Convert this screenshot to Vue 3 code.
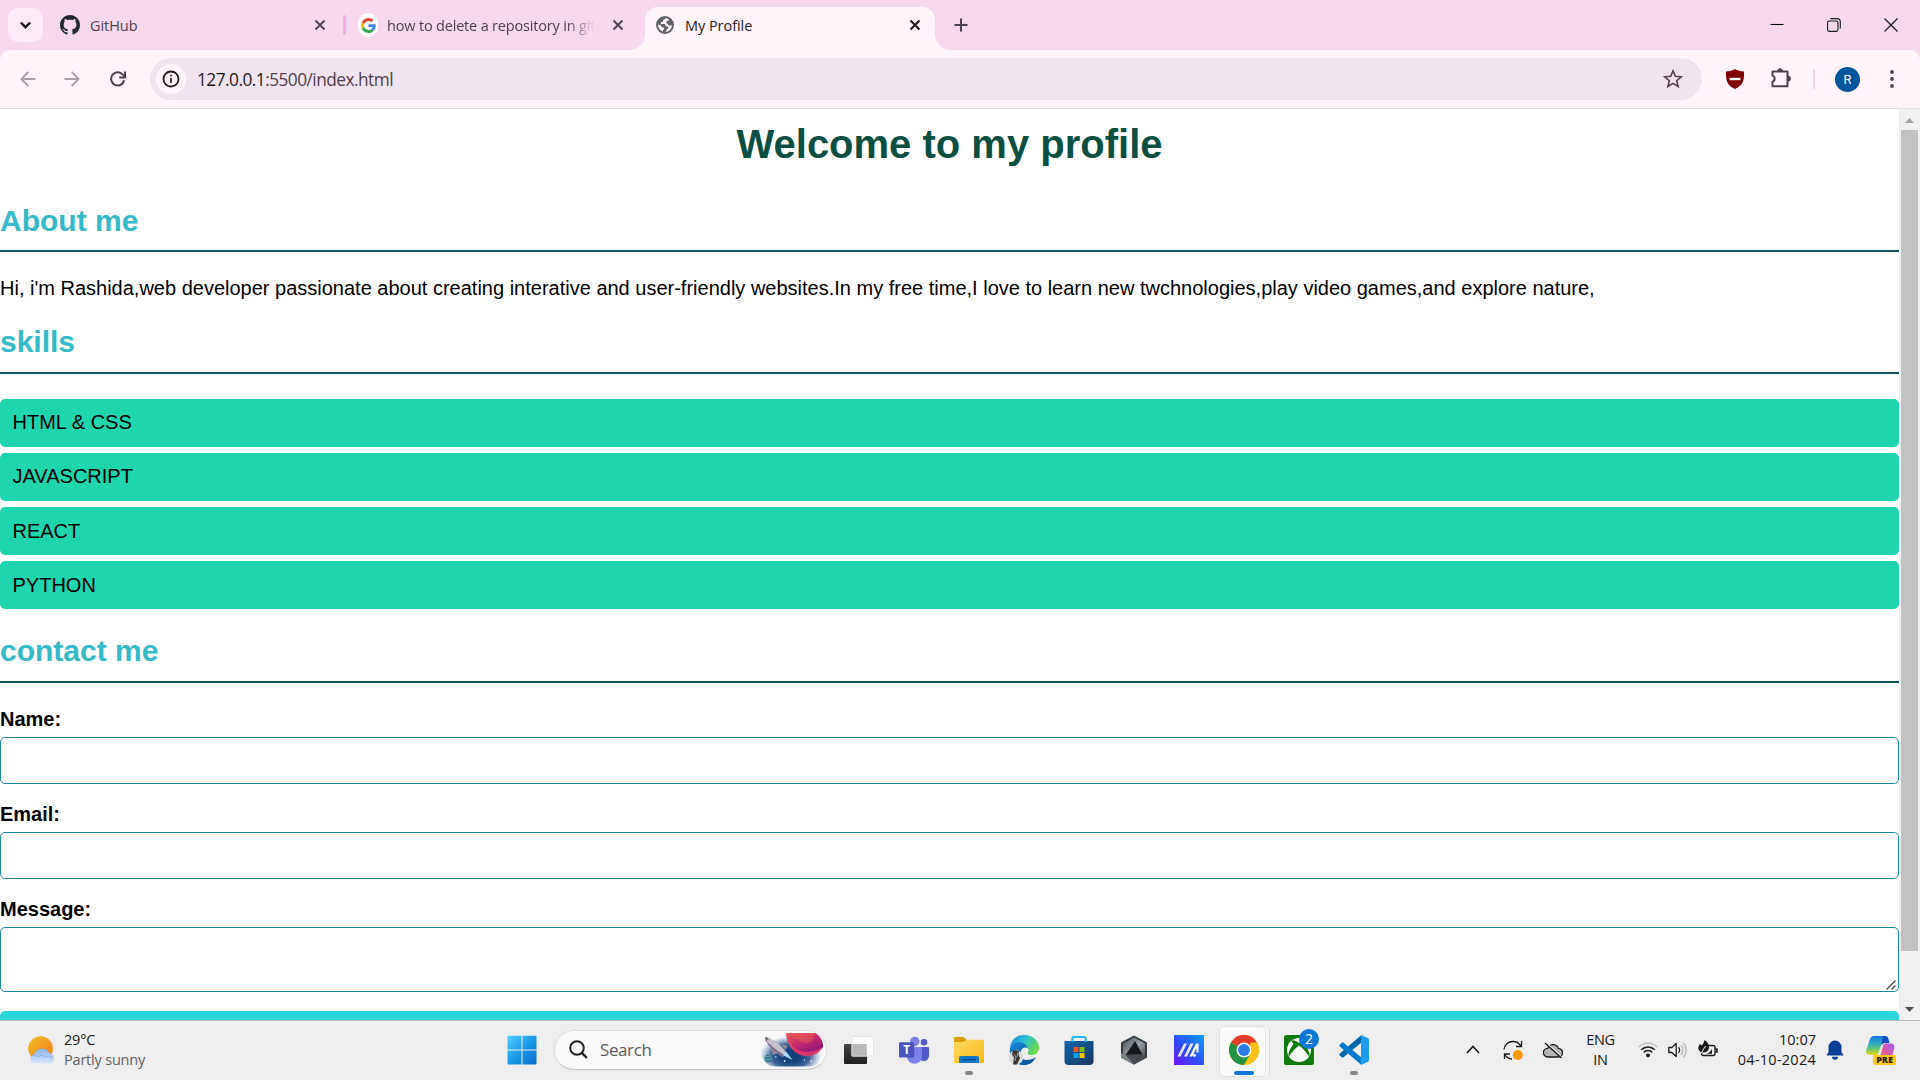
<script setup>
const skills = ['HTML & CSS', 'JAVASCRIPT', 'REACT', 'PYTHON']
</script>

<template>
  <div class="screen">
    <header class="tabs">
      <div class="tabsearch">
        <svg width="35" height="34" viewBox="0 0 35 34"><path d="M12.8 14.5l4.7 4.7 4.7-4.7" fill="none" stroke="#1f1a1d" stroke-width="2.4" /></svg>
      </div>
      <div class="tab first">
        <svg class="fav" width="20" height="20" viewBox="0 0 16 16"><path fill="#24292f" d="M8 0C3.58 0 0 3.58 0 8c0 3.54 2.29 6.53 5.47 7.59.4.07.55-.17.55-.38 0-.19-.01-.82-.01-1.49-2.01.37-2.53-.49-2.69-.94-.09-.23-.48-.94-.82-1.13-.28-.15-.68-.52-.01-.53.63-.01 1.08.58 1.23.82.72 1.21 1.87.87 2.33.66.07-.52.28-.87.51-1.07-1.78-.2-3.64-.89-3.64-3.95 0-.87.31-1.59.82-2.15-.08-.2-.36-1.02.08-2.12 0 0 .67-.21 2.2.82.64-.18 1.32-.27 2-.27s1.36.09 2 .27c1.53-1.04 2.2-.82 2.2-.82.44 1.1.16 1.92.08 2.12.51.56.82 1.27.82 2.15 0 3.07-1.87 3.75-3.65 3.95.29.25.54.73.54 1.48 0 1.07-.01 1.93-.01 2.2 0 .21.15.46.55.38A8.01 8.01 0 0 0 16 8c0-4.42-3.58-8-8-8z" /></svg>
        <span class="title t1">GitHub</span>
        <svg class="x" width="12" height="12" viewBox="0 0 12 12"><path d="M1.5 1.5l9 9m0-9l-9 9" stroke="#50404b" stroke-width="1.9" /></svg>
      </div>
      <i class="tabsep"></i>
      <div class="tab second">
        <span class="gwrap"><svg width="15" height="15" viewBox="0 0 48 48"><path fill="#EA4335" d="M24 9.5c3.54 0 6.71 1.22 9.21 3.6l6.85-6.85C35.9 2.38 30.47 0 24 0 14.62 0 6.51 5.38 2.56 13.22l7.98 6.19C12.43 13.72 17.74 9.5 24 9.5z" /><path fill="#4285F4" d="M46.98 24.55c0-1.57-.15-3.09-.38-4.55H24v9.02h12.94c-.58 2.96-2.26 5.48-4.78 7.18l7.73 6c4.51-4.18 7.09-10.36 7.09-17.65z" /><path fill="#FBBC05" d="M10.53 28.59c-.48-1.45-.76-2.99-.76-4.59s.27-3.14.76-4.59l-7.98-6.19C.92 16.46 0 20.12 0 24s.92 7.54 2.56 10.78l7.97-6.19z" /><path fill="#34A853" d="M24 48c6.48 0 11.93-2.13 15.89-5.81l-7.73-6c-2.15 1.45-4.92 2.3-8.16 2.3-6.26 0-11.57-4.22-13.47-9.91l-7.98 6.19C6.51 42.62 14.62 48 24 48z" /></svg></span>
        <span class="title t2">how to delete a repository in git</span>
        <svg class="x" width="12" height="12" viewBox="0 0 12 12"><path d="M1.5 1.5l9 9m0-9l-9 9" stroke="#50404b" stroke-width="1.9" /></svg>
      </div>
      <div class="tab active">
        <svg class="fav" width="18" height="18" viewBox="0 0 18 18"><circle cx="9" cy="9" r="9" fill="#5f6368" /><path fill="#fff5fa" d="M9.8 2.1c-.3.9-1.1 1.2-2 1.3-.6.1-.9.9-.5 1.6-.1.9-1.2.9-2 1.1-.7.2-.5 1.4-.2 1.9 1.4.2 3.6-.2 4.2.6.5.8.3 1.8 1.4 2 1 .2 2-.1 1.5 1.3-.5 1-1.7 1.3-1.9 2.4-.1.5-.6 1.2-.9 1.6 3.6-.2 6.5-3 6.6-6.7-.9.6-2.5.5-3.4 0-.9-.5-.5-1.4-1.5-1.8-.9-.4-1.3-1.3-.6-2 .6-.6 1.8-.2 2.1-1 .2-.5.3-.9.5-1.1-1-.7-2.1-1.1-3.3-1.2zM2 8.5c-.2 3 1.4 5.8 4.8 7 .1-.8.4-1.4 1.1-1.9.8-.6.5-1.9-.4-2-1.2-.1-1.8-.2-2-1.2C5 9 3.2 9 2 8.5z" /></svg>
        <span class="title t3">My Profile</span>
        <svg class="x" width="12" height="12" viewBox="0 0 12 12"><path d="M1.5 1.5l9 9m0-9l-9 9" stroke="#1f1a1d" stroke-width="2.1" /></svg>
      </div>
      <svg class="plus" width="14" height="14" viewBox="0 0 14 14"><path d="M7 .5v13M.5 7h13" stroke="#50404b" stroke-width="2" /></svg>
      <div class="winbtns">
        <svg width="14" height="14" viewBox="0 0 14 14"><path d="M.5 6.5h13" stroke="#000" stroke-width="1.1" /></svg>
        <svg width="14" height="14" viewBox="0 0 14 14"><rect x=".6" y="3" width="10.4" height="10.4" rx="1.6" fill="none" stroke="#1a1a1a" stroke-width="1.1" /><path d="M3.3 .6H10a3.3 3.3 0 0 1 3.3 3.3v6.7" fill="none" stroke="#1a1a1a" stroke-width="1.1" /></svg>
        <svg width="14" height="14" viewBox="0 0 14 14"><path d="M.5 .5l13 13m0-13l-13 13" stroke="#1a1a1a" stroke-width="1.2" /></svg>
      </div>
    </header>

    <div class="toolbarwrap">
      <nav class="toolbar">
        <svg class="back" width="16" height="16" viewBox="0 0 16 16"><path d="M15.5 8H1.8M8.3 1L1.4 8l6.9 7" fill="none" stroke="#a99fa5" stroke-width="1.9" /></svg>
        <svg class="fwd" width="16" height="16" viewBox="0 0 16 16"><path d="M.5 8h13.7M7.7 1l6.9 7-6.9 7" fill="none" stroke="#a99fa5" stroke-width="1.9" /></svg>
        <svg class="reload" width="16" height="16" viewBox="0 0 16 16"><path d="M14.2 9.2A6.6 6.6 0 1 1 12.8 3.6L14.4 5.4" fill="none" stroke="#50404b" stroke-width="2" /><path d="M15 .5v6H9.2" fill="none" stroke="#50404b" stroke-width="2" /></svg>
        <div class="omni">
          <span class="info"><svg width="18" height="18" viewBox="0 0 18 18"><circle cx="9" cy="9" r="7.5" fill="none" stroke="#1f1a1d" stroke-width="1.8" /><path d="M9 8v5M9 4.8v1.8" stroke="#1f1a1d" stroke-width="1.7" /></svg></span>
          <span class="url"><b>127.0.0.1</b>:5500/index.html</span>
          <svg class="star" width="20" height="20" viewBox="0 0 20 20"><path d="M10 1.8l2.3 5.5 6 .5-4.6 3.9 1.4 5.8L10 14.4l-5.1 3.1 1.4-5.8L1.7 7.8l6-.5z" fill="none" stroke="#50404b" stroke-width="1.6" /></svg>
        </div>
        <svg class="shield" width="20" height="20" viewBox="0 0 20 20"><path d="M10 0c2.2 1.7 5.4 2.4 9 2.6.3 7.8-.5 13.9-9 17.4C1.5 16.5.7 10.4 1 2.6 4.6 2.4 7.8 1.7 10 0z" fill="#800000" /><rect x="4.6" y="8.8" width="10.8" height="2.4" fill="#fff" /></svg>
        <svg class="puzzle" width="22" height="22" viewBox="0 0 22 22"><path d="M2.5 4.5h15v14.8h-15v-4.500a3.300 3.300 0 0 0 0-6.200z" fill="none" stroke="#50404b" stroke-width="2" stroke-linejoin="round" /><path d="M7.8 4a2.300 2.300 0 0 1 4.600 0zM18 9.200a2.400 2.400 0 0 1 0 5z" fill="#50404b" stroke="#50404b" /></svg>
        <i class="barsep"></i>
        <span class="avatar">R</span>
        <svg class="dots" width="4" height="18" viewBox="0 0 4 18"><g fill="#50404b"><circle cx="2" cy="2" r="1.9" /><circle cx="2" cy="9" r="1.9" /><circle cx="2" cy="16" r="1.9" /></g></svg>
      </nav>
    </div>

    <div class="viewport">
      <main class="page">
        <h1>Welcome to my profile</h1>
        <h2>About me</h2>
        <p>Hi, i'm Rashida,web developer passionate about creating interative and user-friendly websites.In my free time,I love to learn new twchnologies,play video games,and explore nature,</p>
        <h2>skills</h2>
        <ul>
          <li v-for="s in skills" :key="s">{{ s }}</li>
        </ul>
        <h2>contact me</h2>
        <form>
          <label>Name:</label>
          <div class="field"></div>
          <label>Email:</label>
          <div class="field"></div>
          <label>Message:</label>
          <div class="field area">
            <svg width="10" height="10" viewBox="0 0 10 10"><path d="M.5 9.500l9-9M5.500 9.500l4-4" stroke="#4d4d4d" stroke-width="1.4" /></svg>
          </div>
          <div class="submit"></div>
        </form>
      </main>
      <aside class="scroll">
        <svg width="21" height="21" viewBox="0 0 21 21"><path d="M6 14l4.500-5 4.500 5z" fill="#a3a3a3" /></svg>
        <div class="thumb"></div>
        <svg class="down" width="21" height="21" viewBox="0 0 21 21"><path d="M6 8l4.500 5L15 8z" fill="#505050" /></svg>
      </aside>
    </div>

    <footer class="taskbar">
      <div class="weather">
        <svg width="28" height="28" viewBox="0 0 28 28">
          <defs>
            <linearGradient id="sun" x1="0" y1="0" x2="1" y2="1"><stop stop-color="#f5bd2b" /><stop offset="1" stop-color="#ef7c14" /></linearGradient>
            <linearGradient id="cl" x1="0" y1="0" x2="0" y2="1"><stop stop-color="#8eb3f2" /><stop offset="1" stop-color="#d7e7fd" /></linearGradient>
          </defs>
          <circle cx="12.500" cy="12.500" r="12.300" fill="url(#sun)" />
          <path d="M6.500 27.500a4.400 4.400 0 0 1-.4-8.700 8.200 8.200 0 0 1 15.200-1.500 5.300 5.300 0 0 1 1.500 10.200z" fill="url(#cl)" />
          <path d="M3 20c3-2 5.500-.8 7 1 2-2.500 6-1.800 7 .5 2-2 5.500-2 7.500 0" fill="none" stroke="#7b9fe6" stroke-width=".7" />
        </svg>
        <div class="wtext"><span class="temp">29°C</span><span class="cond">Partly sunny</span></div>
      </div>

      <div class="apps">
        <div class="app"><svg width="30" height="30" viewBox="0 0 30 30"><defs><linearGradient id="win" x1="0" y1="0" x2="1" y2="1"><stop stop-color="#4fd0ff" /><stop offset=".55" stop-color="#1694e4" /><stop offset="1" stop-color="#0870cd" /></linearGradient></defs><path fill="url(#win)" d="M1.500 .8h13v13.700H.5V1.800a1 1 0 0 1 1-1zM15.500 .8h13a1 1 0 0 1 1 1v12.700h-14zM.5 15.500h14v14h-13a1 1 0 0 1-1-1zM15.500 15.500h14v13a1 1 0 0 1-1 1h-13z" /></svg></div>

        <div class="search">
          <svg class="lens" width="19" height="19" viewBox="0 0 19 19"><circle cx="8" cy="8" r="6.800" fill="none" stroke="#222" stroke-width="2" /><path d="M12.800 12.800l5 5" stroke="#222" stroke-width="2.400" /></svg>
          <span>Search</span>
          <svg class="space" width="63" height="34" viewBox="0 0 64 34" preserveAspectRatio="none">
            <defs>
              <radialGradient id="sky"><stop offset=".3" stop-color="#12417b" /><stop offset=".62" stop-color="#204a86" stop-opacity=".85" /><stop offset="1" stop-color="#6b8bbd" stop-opacity="0" /></radialGradient>
              <linearGradient id="planet" x1="0" y1="0" x2=".7" y2="1"><stop stop-color="#e96052" /><stop offset=".5" stop-color="#c4286e" /><stop offset="1" stop-color="#86107c" /></linearGradient>
              <clipPath id="cut"><rect width="64" height="33.500" rx="14" /></clipPath>
            </defs>
            <g clip-path="url(#cut)">
              <ellipse cx="30" cy="23" rx="32" ry="20" fill="url(#sky)" />
            </g>
            <path d="M25.500 0H55c5 3 8.500 8 8 14-5 7-13 10-21 8.500C33 20.500 26 11 25.500 0z" fill="url(#planet)" />
            <path d="M33 0h22c-1 7-4 10-9 10S34 6 33 0z" fill="#e5574f" opacity=".5" />
            <path d="M25.500 0c3 13 14 26 37.500 14-5 8-13 10.500-21 8.500-10-2.500-16-12-16.500-22.500z" fill="#ec4168" opacity=".75" />
            <circle cx="7.500" cy="25.500" r="4" fill="#397a92" /><path d="M4 24l6-1m-6 4l7-1" stroke="#70aeb4" stroke-width=".8" />
            <path d="M4 4.500c6-.3 14 5 22 15l-4 4.500C12 18 5 11 4 4.500z" fill="#c8c0cb" />
            <path d="M5 8c4 7 9 11 17 16l2-2C16 18 10 12 5 8z" fill="#776e88" />
            <path d="M4 4l4 1-3 4z" fill="#6e6071" /><path d="M11 16l1 6 5-2zM20 11l7 2-2 4z" fill="#9a8b9b" />
            <path d="M22 22l4-3 6 8z" fill="#a9dcf7" />
            <g fill="#dceaff"><circle cx="24" cy="28" r=".9" /><circle cx="44" cy="27" r=".7" /><circle cx="51" cy="28" r="1" /><circle cx="15" cy="24" r=".7" /></g>
          </svg>
        </div>

        <div class="app"><svg width="30" height="30" viewBox="0 0 30 30"><defs><linearGradient id="tv" x1="0" y1="0" x2="0" y2="1"><stop stop-color="#434343" /><stop offset="1" stop-color="#202020" /></linearGradient></defs><rect y="9" width="23" height="20" rx="1" fill="url(#tv)" /><rect x="7.500" y="1" width="22.500" height="20.500" rx="1" fill="#fff" opacity=".8" /><path d="M7.500 9H22.500V21.500H7.500z" fill="#aaa" opacity=".65" /><rect x="8" y="1.500" width="21.500" height="19.500" rx=".6" fill="none" stroke="#ddd" stroke-opacity=".8" /></svg></div>

        <div class="app"><svg width="30" height="30" viewBox="0 0 30 30"><circle cx="15.800" cy="6.500" r="4.700" fill="#7b83eb" /><circle cx="25" cy="7.300" r="3.300" fill="#5059c9" /><path d="M20 12h9a1 1 0 0 1 1 1v7c0 4-2.500 6-5 6s-5-2-5-6z" fill="#5059c9" /><path d="M8 12h14a1 1 0 0 1 1 1v8c0 5-3.500 7.500-7.500 7.500S8 26 8 21z" fill="#7b83eb" /><rect y="7.200" width="15.300" height="15.300" rx="1.300" fill="#4b53bc" /><text x="7.700" y="19" font-size="12" font-weight="700" fill="#fff" text-anchor="middle" class="ui">T</text></svg></div>

        <div class="app run"><svg width="30" height="30" viewBox="0 0 30 30"><defs><linearGradient id="fo" x1="0" y1="0" x2="1" y2="1"><stop stop-color="#ffdb68" /><stop offset="1" stop-color="#fcb813" /></linearGradient></defs><path d="M0 3.200a1.200 1.200 0 0 1 1.200-1.200h8.300L13 4.900V9H0z" fill="#dd9d0b" /><path d="M0 7h9l3.500-2.200H29a1 1 0 0 1 1 1V28H0z" fill="url(#fo)" /><path d="M5 28v-5.200A1.800 1.800 0 0 1 6.800 21h16.400a1.800 1.800 0 0 1 1.800 1.800V28z" fill="#1475c3" /><path d="M8.500 24.500h13" stroke="#0b4d91" stroke-width="1.300" /></svg></div>

        <div class="app"><svg width="30" height="30" viewBox="0 0 30 30"><defs><linearGradient id="e1" x1="0" y1="0" x2="1" y2=".5"><stop stop-color="#1686d5" /><stop offset=".5" stop-color="#2dc0d6" /><stop offset="1" stop-color="#68d94f" /></linearGradient><linearGradient id="e2" x1="0" y1="0" x2="1" y2="1"><stop stop-color="#1387d8" /><stop offset="1" stop-color="#0b4d91" /></linearGradient></defs><path d="M1 13C1.500 5 7.500 0 15 0c9 0 15 6 15 12.500 0 5-3.500 7.500-7.500 7.500-3.500 0-5-1.500-3.500-4C18 11 12 8 7 9c-3 .6-5 2-6 4z" fill="url(#e1)" /><path d="M1 13c2-5 8-7 13-5 3 1.300 4.500 3.500 4.500 6-3-2-7 0-7 5 0 5 6 9 15.500 3C24 28 20 30 15 30 6 30-.5 22.500 1 13z" fill="url(#e2)" /><path d="M12 16c1-4 6-5 8-1-3 4-1 6 3 6 2 0 3.500-.7 4-.3-2 3-10 5-13 .5z" fill="#eee" /><circle cx="7" cy="22.500" r="7.200" fill="#d9d9d7" /><path d="M4 15l6 1-.5 4 1.500 3-3 6.500H4l1-7-2-3z" fill="#363535" /><path d="M5 19l2 3-1 4m3-9l-1 5" stroke="#b79c93" stroke-width="1" fill="none" /></svg></div>

        <div class="app"><svg width="30" height="30" viewBox="0 0 30 30"><defs><linearGradient id="st" x1="0" y1="0" x2="1" y2="1"><stop stop-color="#0d67af" /><stop offset="1" stop-color="#1a355c" /></linearGradient></defs><path d="M.5 6h29v20a4 4 0 0 1-4 4h-21a4 4 0 0 1-4-4z" fill="url(#st)" /><path d="M8.300 7V3.500A1.500 1.500 0 0 1 9.800 2h10.400a1.500 1.500 0 0 1 1.500 1.500V7" fill="none" stroke="#23b9f2" stroke-width="2" /><path fill="#f25022" d="M9.500 12h5v5h-5z" /><path fill="#7fba00" d="M15.500 12h5v5h-5z" /><path fill="#00a4ef" d="M9.500 18h5v5h-5z" /><path fill="#ffb900" d="M15.500 18h5v5h-5z" /></svg></div>

        <div class="app"><svg width="30" height="30" viewBox="0 0 30 30"><defs><linearGradient id="hx" x1="0" y1="0" x2="1" y2="1"><stop stop-color="#4b5358" /><stop offset=".5" stop-color="#9ba2a7" /><stop offset="1" stop-color="#34383b" /></linearGradient></defs><path d="M15 .5l13 7v15l-13 7-13-7v-15z" fill="#33393d" /><path d="M15 2.500l11 6v12.800L15 27 4 21.300V8.500z" fill="url(#hx)" /><path d="M16 6l7.500 13.500-17 .5z" fill="#171a1c" /><path d="M2 18l4.500 2 17-.5 4.500 3-13 7-13-7z" fill="#444a4f" /><path d="M2 18l4.500 2L15 29.500l-13-7z" fill="#7e868b" /></svg></div>

        <div class="app"><svg width="30" height="30" viewBox="0 0 30 30"><defs><linearGradient id="ma" x1="1" y1="0" x2="0" y2="1"><stop stop-color="#06a0fb" /><stop offset=".55" stop-color="#314cfa" /><stop offset="1" stop-color="#6c13ef" /></linearGradient></defs><path d="M0 0h30v30H0z" fill="url(#ma)" /><path d="M3.500 21.500L10 8.500h3L6.500 21.500zM10 21.500l6.500-13h3L13 21.500z" fill="#e5e9ff" /><path d="M15.500 21.500L22 8.500h2.500v9h-2v-4.500L18 21.500z" fill="#fff" /><circle cx="20.300" cy="20.300" r="1.500" fill="#fff" /></svg></div>

        <div class="app focus"><svg width="30" height="30" viewBox="0 0 48 48"><circle cx="24" cy="24" r="24" fill="#fbc116" /><path d="M24 24L3.200 12A24 24 0 0 1 44.800 12z" fill="#e33b2e" /><path d="M3.200 12A24 24 0 0 0 24 48l10.400-18z" fill="#229342" /><path d="M44.800 12A24 24 0 0 1 24 48l10.400-18L34 12z" fill="#fbc116" /><circle cx="24" cy="24" r="12" fill="#fff" /><circle cx="24" cy="24" r="9.500" fill="#2b7de9" /></svg></div>

        <div class="app"><svg width="30" height="30" viewBox="0 0 30 30"><rect width="30" height="30" rx="2" fill="#107c10" /><circle cx="15" cy="15" r="12" fill="#fff" /><path d="M7 5.500c3-1 6 1 8 2.500 2-1.500 5-3.500 8-2.500L20.500 9c3 4 6 9 4.700 13-2-4-6-8.500-10.200-11.500C10.800 13.500 6.800 18 4.800 22 3.500 18 6.500 13 9.500 9z" fill="#107c10" /></svg><span class="badge">2</span></div>

        <div class="app run"><svg width="30" height="30" viewBox="0 0 30 30"><path d="M22.500 0v7.500L4.500 22.300a1.200 1.200 0 0 1-1.600 0L.8 20.400a1.200 1.200 0 0 1 0-1.800z" fill="#0065a9" /><path d="M22.500 30v-7.500L4.500 7.700a1.200 1.200 0 0 0-1.600 0L.8 9.600a1.200 1.200 0 0 0 0 1.800z" fill="#007acc" /><path d="M22 0l6.800 3a2 2 0 0 1 1.200 1.800v20.400a2 2 0 0 1-1.200 1.800L22 30z" fill="#1f9cf0" /></svg></div>
      </div>

      <div class="tray">
        <div class="cell"><svg width="14" height="9" viewBox="0 0 14 9"><path d="M1 8l6-6.500L13 8" fill="none" stroke="#1a1a1a" stroke-width="1.600" /></svg></div>
        <div class="cell"><svg width="20" height="20" viewBox="0 0 20 20"><path d="M1 9.500C1.500 5 5.200 1.500 10 1.500c3.500 0 6.500 2 8 4.800M18.500 1v5.500H13M1.500 19v-5H7M1.800 14.500c1.500 2.500 4 4.300 7.200 4.500" fill="none" stroke="#1a1a1a" stroke-width="1.300" /><circle cx="14.800" cy="15" r="5" fill="#ff9800" /></svg></div>
        <div class="cell"><svg width="20" height="18" viewBox="0 0 20 18"><path d="M4.800 16a4.300 4.300 0 0 1-.2-8.600 5.800 5.800 0 0 1 10.800 0A4.300 4.300 0 0 1 15.200 16z" fill="#b5b5b5" stroke="#1a1a1a" stroke-width="1.300" /><path d="M3 1.500l16 15" stroke="#eee" stroke-width="1.500" /><path d="M2 2l16.500 15" stroke="#1a1a1a" stroke-width="1.400" /></svg></div>
        <div class="lang"><span>ENG</span><span>IN</span></div>
        <div class="status">
          <svg width="20" height="20" viewBox="0 0 20 20" fill="none"><path d="M.6 7a13.300 13.300 0 0 1 18.800 0" stroke="#bcbcbc" stroke-width="1.200" /><path d="M3.200 9.800a9.600 9.600 0 0 1 13.600 0M5.700 12.300a6 6 0 0 1 8.600 0" stroke="#1a1a1a" stroke-width="1.400" /><circle cx="10" cy="15.300" r="1.900" fill="#1a1a1a" /></svg>
          <svg width="20" height="20" viewBox="0 0 20 20" fill="none"><path d="M.8 7.500h3l4.400-4v13l-4.400-4h-3z" stroke="#1a1a1a" stroke-width="1.300" stroke-linejoin="round" /><path d="M10.500 7.300a3.800 3.800 0 0 1 0 5.400" stroke="#1a1a1a" stroke-width="1.300" /><path d="M12.800 5a7 7 0 0 1 0 10M15.200 2.700a10.500 10.500 0 0 1 0 14.600" stroke="#bcbcbc" stroke-width="1.300" /></svg>
          <svg width="20" height="20" viewBox="0 0 20 20" fill="none"><rect x="3.500" y="5.500" width="13.500" height="10" rx="2" stroke="#1a1a1a" stroke-width="1.400" /><path d="M17.500 9h1.500v3h-1.500" stroke="#1a1a1a" stroke-width="1.400" /><path d="M7 13.800c3 0 5.500-2 7-4.800v4.800z" fill="#1a1a1a" /><path d="M6.500 0c3.500 2 5 5 4.500 8-.5 3-3 4.500-5.500 4.500S.5 11 .3 8.500C.2 6.500 1 5 2.500 4l1 1.700C5 4.500 6 2.500 6.500 0z" fill="#1a1a1a" /><path d="M3 13.500L7.500 6" stroke="#eee" /></svg>
        </div>
        <div class="clock"><span class="time">10:07</span><span class="date">04-10-2024</span></div>
        <svg class="bell" width="18" height="20" viewBox="0 0 18 20"><path d="M9 .5a6.500 6.500 0 0 1 6.500 6.500v5l2 3.500H.5l2-3.500V7A6.500 6.500 0 0 1 9 .5zM6 16.800h6a3 3 0 0 1-6 0z" fill="#0a3f96" /></svg>
        <div class="copilot">
          <svg width="30" height="28" viewBox="0 0 30 28"><defs><linearGradient id="c1" x1="0" y1="0" x2="0" y2="1"><stop stop-color="#1672df" /><stop offset=".35" stop-color="#26a8c8" /><stop offset=".65" stop-color="#5cc57b" /><stop offset="1" stop-color="#f0d61a" /></linearGradient><linearGradient id="c2" x1="1" y1="0" x2="0" y2="1"><stop stop-color="#9c5ff0" /><stop offset=".5" stop-color="#e05ba0" /><stop offset="1" stop-color="#fa8b4c" /></linearGradient></defs><path d="M8 1h10c2 0 3 1 3.500 3l1 4h-4c-2 0-3 1-4 4l-2 6c-.6 1.500-1.500 2-3 2H4c-3 0-4.500-2-3.700-5L4 4c.8-2 2-3 4-3z" fill="url(#c1)" /><path d="M17 1h2c2 0 3 1 3.500 3l1 4h-4c-2 0-3 .5-4 3z" fill="#174bc4" /><path d="M19.500 8.500h5c3 0 4.500 2 3.700 5l-2.500 9c-.8 2-2 3-4 3H10c2 0 3-1 3.500-2.500L17 11c.6-1.700 1.200-2.500 2.500-2.500z" fill="url(#c2)" /></svg>
          <span>PRE</span>
        </div>
      </div>
    </footer>
  </div>
</template>

<style>
body { margin: 0; overflow: hidden; }
</style>

<style scoped>
* { box-sizing: border-box; }
svg { display: block; flex: none; }
.screen { width: 1920px; height: 1080px; display: flex; flex-direction: column; background: #fff; overflow: hidden; font-family: "Open Sans", "Noto Sans", sans-serif; }
.ui { font-family: "Open Sans", sans-serif; }

.tabs { height: 50px; flex: none; display: flex; background: #f7d8ec; }
.tabsearch { width: 35px; height: 34px; margin: 8px 7px 0 8px; border-radius: 10px; background: #ffebf7; }
.tab { height: 50px; display: flex; align-items: center; }
.title { font-size: 14.5px; color: #50404b; white-space: nowrap; overflow: hidden; }
.x { margin-left: auto; }
.first { width: 293px; padding: 0 17px 0 10px; }
.first .title { margin-left: 10px; }
.tabsep { width: 3px; height: 20px; margin-top: 15px; background: #f7aee8; border-radius: 1.5px; }
.second { width: 299px; padding: 0 21px 0 12px; }
.gwrap { width: 20px; height: 24px; border-radius: 10px; background: #fff; display: flex; align-items: center; justify-content: center; }
.t1 { letter-spacing: -0.05px; }
.t2 { width: 208px; margin-left: 9px; letter-spacing: -0.18px; -webkit-mask-image: linear-gradient(90deg, #000 180px, transparent 208px); mask-image: linear-gradient(90deg, #000 180px, transparent 208px); }
.active { position: relative; width: 290px; height: 43px; margin-top: 7px; padding: 0 14px 7px 11px; background: #fff5fa; border-radius: 13px 13px 0 0; }
.active::before, .active::after { content: ""; position: absolute; bottom: 0; width: 15px; height: 15px; }
.active::before { left: -15px; background: radial-gradient(circle at 0 0, transparent 14.5px, #fff5fa 15px); }
.active::after { right: -15px; background: radial-gradient(circle at 100% 0, transparent 14.5px, #fff5fa 15px); }
.active .title { margin-left: 11px; color: #1f1a1d; letter-spacing: -0.05px; }
.plus { margin: 18px 0 0 18.5px; }
.winbtns { margin: 17.5px 22px 0 auto; display: flex; gap: 43px; }

.toolbarwrap { height: 59px; flex: none; background: #f7d8ec; }
.toolbar { height: 59px; display: flex; align-items: center; background: #fff5fa; border-radius: 10px 10px 0 0; border-bottom: 1px solid #e9dde4; }
.back { margin-left: 19.5px; }
.fwd { margin-left: 28.5px; }
.reload { margin: 0 0 0 29.5px; }
.omni { width: 1552px; height: 42px; margin-left: 24.5px; display: flex; align-items: center; border-radius: 21px; background: #f0e5ee; }
.info { width: 30px; height: 30px; margin-left: 6px; display: flex; align-items: center; justify-content: center; border-radius: 50%; background: #fff5fa; }
.url { margin-left: 11px; font-size: 17.3px; letter-spacing: -0.53px; color: #50404b; }
.url b { font-weight: 400; color: #1f1a1d; }
.star { margin: 0 19px 0 auto; }
.shield { margin-left: 23px; }
.puzzle { margin: 0 0 2px 25px; }
.barsep { width: 2px; height: 20px; margin-left: 21px; background: #fbd3f1; }
.avatar { width: 25px; height: 25px; margin-left: 20px; border-radius: 50%; background: #00569c; color: #fff; font: 13px/25px Roboto, sans-serif; text-align: center; }
.dots { margin-left: 30px; }

.viewport { height: 911px; flex: none; display: flex; overflow: hidden; }
.page { width: 1899px; font-family: "Liberation Sans", Arial, sans-serif; font-size: 20px; line-height: 23px; color: #000; }
h1 { height: 46px; margin: 12px 0 37px; font-size: 40px; line-height: 46px; text-align: center; color: #0b4f43; }
h2 { height: 48px; margin: 0; font-size: 30px; line-height: 34px; color: #34bac8; border-bottom: 2px solid #11545f; }
p { margin: 25px 0; }
h2 + p { white-space: nowrap; }
ul { list-style: none; margin: 25px 0; padding: 0; display: flex; flex-direction: column; gap: 6px; }
li { height: 48px; padding: 12px 12.5px; background: #1ed5ae; border-radius: 5px; }
li:nth-child(n + 3) { padding-top: 13px; }
p + h2 { height: 49px; }
ul + h2 { height: 49px; }
form { padding-top: 25px; display: flex; flex-direction: column; }
label { height: 23px; font-weight: 700; margin-bottom: 6px; }
.field { height: 47px; margin-bottom: 19px; border: 1px solid #1b879a; border-radius: 5px; }
.area { height: 65px; display: flex; align-items: flex-end; justify-content: flex-end; padding: 0 2px 1px; }
.submit { height: 48px; flex: none; border-radius: 5px; background: #2bd6dd; }
.scroll { width: 21px; background: #f1f1f1; display: flex; flex-direction: column; }
.thumb { width: 17px; height: 821px; margin-left: 2px; background: #c1c1c1; }
.down { margin-top: auto; }

.taskbar { height: 60px; flex: none; display: flex; align-items: center; padding-bottom: 2px; background: #eee; border-top: 1px solid #bdbdbd; }
.weather { width: 467px; display: flex; align-items: center; padding-left: 28px; }
.wtext { display: flex; flex-direction: column; margin-left: 8px; font-size: 14.5px; line-height: 20px; color: #1a1a1a; }
.temp { letter-spacing: -0.2px; }
.cond { color: #5e5e5e; letter-spacing: -0.2px; }
.apps { display: flex; align-items: center; margin-left: 27.5px; height: 57px; }
.app { position: relative; width: 55px; height: 57px; display: flex; align-items: center; justify-content: center; }
.search { width: 273px; height: 40px; margin: 0 4px 0 4.5px; display: flex; align-items: center; padding-left: 14px; border: 1px solid #dedede; border-bottom-color: #c5c5c5; border-radius: 20px; background: #fafafa; }
.search span { margin-left: 12px; font-size: 17px; letter-spacing: -0.4px; color: #5a5a5a; }
.space { margin: 0 2px 0 auto; }
.run::after { content: ""; position: absolute; left: 23.5px; bottom: 3px; width: 8px; height: 4px; border-radius: 2px; background: #858585; }
.focus { z-index: 0; }
.focus::before { content: ""; position: absolute; z-index: -1; left: 3px; top: 5px; width: 45px; height: 49px; border-radius: 5px; background: #fafafa; border: 1px solid #e2e2e2; box-shadow: 4px 0 0 -1px #f5f5f5, 5px 0 0 -1px #dedede; }
.focus::after { content: ""; position: absolute; left: 17.5px; bottom: 3px; width: 20px; height: 4px; border-radius: 2px; background: #0a78d4; }
.badge { position: absolute; left: 28px; top: 8px; width: 20px; height: 20px; border-radius: 50%; background: #0a78d4; color: #fff; font-size: 14px; line-height: 20px; text-align: center; }

.tray { margin-left: auto; padding-right: 24px; display: flex; align-items: center; font-size: 14.5px; line-height: 20px; color: #1a1a1a; }
.cell { width: 40px; display: flex; justify-content: center; }
.lang { width: 55px; display: flex; flex-direction: column; align-items: center; letter-spacing: -0.3px; }
.status { margin-left: 10px; display: flex; gap: 10px; }
.clock { width: 98px; display: flex; flex-direction: column; align-items: flex-end; }
.time { letter-spacing: 0; }
.date { letter-spacing: 0.25px; }
.bell { margin-left: 10px; }
.copilot { position: relative; width: 30px; height: 30px; margin-left: 22px; }
.copilot span { position: absolute; left: 7px; bottom: 0; width: 23px; height: 10px; border-radius: 2px; background: #ffc91c; font-size: 9px; font-weight: 800; line-height: 10px; text-align: center; color: #2d2500; }
</style>
